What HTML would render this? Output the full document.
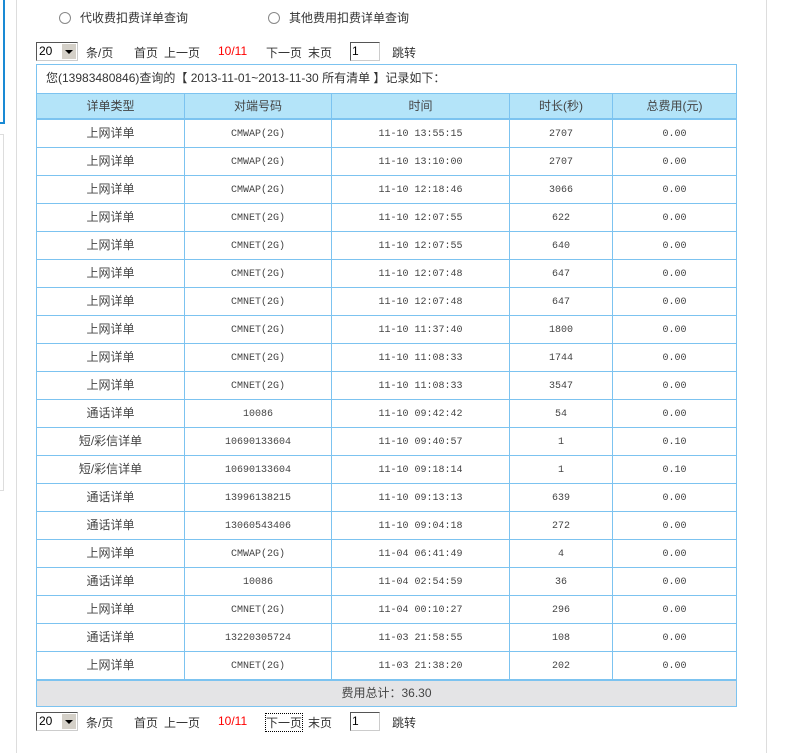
<!DOCTYPE html>
<html><head><meta charset="utf-8"><style>
body{margin:0;width:804px;height:753px;background:#fff;position:relative;overflow:hidden;font-family:"Liberation Sans","Noto Sans CJK SC",sans-serif;font-size:12px;color:#333}
.abs{position:absolute}
.radio{width:10px;height:10px;border:1px solid #888;border-radius:50%;background:#fff}
.pg{position:absolute;left:36px;height:20px;font-size:12px;color:#333}
.pg span{position:absolute;top:2px;white-space:nowrap}
.sel{position:absolute;left:0;top:0;width:40px;height:17px;border:1px solid #555;border-right-color:#ccc;border-bottom-color:#ccc;background:#fff}
.sel b{position:absolute;left:2px;top:1px;font-weight:normal;color:#000}
.sel i{position:absolute;right:1px;top:1px;width:14px;height:15px;background:#d4d0c8;border:0}
.sel i:after{content:"";position:absolute;left:3px;top:6px;border-left:4px solid transparent;border-right:4px solid transparent;border-top:4px solid #000}
.inp{position:absolute;left:314px;top:0;width:28px;height:17px;border:1px solid #555;border-right-color:#ccc;border-bottom-color:#ccc;background:#fff}
.inp b{position:absolute;left:1px;top:1px;font-weight:normal;color:#000}
table{position:absolute;left:36px;top:93px;border-collapse:collapse;width:701px}
td{border:1px solid #7cc3f0;height:24px;line-height:24px;padding:3px 0 0 0;text-align:center;vertical-align:middle;font-size:10px;color:#444;font-family:"Liberation Mono","Noto Sans CJK SC",monospace}
tr.h td{background:#b4e4f9;font-size:12px;height:24px;line-height:24px;padding:0;border-bottom:2px solid #7cc3f0;font-family:"Liberation Sans","Noto Sans CJK SC",sans-serif}
td.t{font-size:12px;height:27px;line-height:27px;padding:0;font-family:"Liberation Sans","Noto Sans CJK SC",sans-serif}
</style></head><body>
<div class="abs" style="left:-4px;top:-4px;width:5px;height:124px;border:2px solid #1a8ad4"></div>
<div class="abs" style="left:-4px;top:134px;width:6px;height:355px;border:1px solid #ddd"></div>
<div class="abs" style="left:16px;top:0;width:1px;height:753px;background:#ddd"></div>
<div class="abs" style="left:766px;top:0;width:1px;height:753px;background:#ddd"></div>

<div class="abs radio" style="left:59px;top:12px"></div>
<div class="abs" style="left:80px;top:9px;font-size:12px">代收费扣费详单查询</div>
<div class="abs radio" style="left:268px;top:12px"></div>
<div class="abs" style="left:289px;top:9px;font-size:12px">其他费用扣费详单查询</div>

<div class="pg" style="top:42px">
<div class="sel"><b>20</b><i></i></div>
<span style="left:50px">条/页</span><span style="left:98px">首页</span><span style="left:128px">上一页</span><span style="left:182px;color:#f00">10/11</span><span style="left:230px">下一页</span><span style="left:272px">末页</span>
<div class="inp"><b>1</b></div><span style="left:356px">跳转</span>
</div>

<div class="abs" style="left:36px;top:64px;width:699px;height:28px;border:1px solid #7cc3f0;border-bottom:none"></div>
<div class="abs" style="left:46px;top:69px;font-size:12px">您(13983480846)查询的【 2013-11-01~2013-11-30 所有清单 】记录如下：</div>

<table>
<tr class="h"><td style="width:147px">详单类型</td><td style="width:146px">对端号码</td><td style="width:177px">时间</td><td style="width:102px">时长(秒)</td><td>总费用(元)</td></tr>
<tr><td class="t">上网详单</td><td>CMWAP(2G)</td><td>11-10 13:55:15</td><td>2707</td><td>0.00</td></tr>
<tr><td class="t">上网详单</td><td>CMWAP(2G)</td><td>11-10 13:10:00</td><td>2707</td><td>0.00</td></tr>
<tr><td class="t">上网详单</td><td>CMWAP(2G)</td><td>11-10 12:18:46</td><td>3066</td><td>0.00</td></tr>
<tr><td class="t">上网详单</td><td>CMNET(2G)</td><td>11-10 12:07:55</td><td>622</td><td>0.00</td></tr>
<tr><td class="t">上网详单</td><td>CMNET(2G)</td><td>11-10 12:07:55</td><td>640</td><td>0.00</td></tr>
<tr><td class="t">上网详单</td><td>CMNET(2G)</td><td>11-10 12:07:48</td><td>647</td><td>0.00</td></tr>
<tr><td class="t">上网详单</td><td>CMNET(2G)</td><td>11-10 12:07:48</td><td>647</td><td>0.00</td></tr>
<tr><td class="t">上网详单</td><td>CMNET(2G)</td><td>11-10 11:37:40</td><td>1800</td><td>0.00</td></tr>
<tr><td class="t">上网详单</td><td>CMNET(2G)</td><td>11-10 11:08:33</td><td>1744</td><td>0.00</td></tr>
<tr><td class="t">上网详单</td><td>CMNET(2G)</td><td>11-10 11:08:33</td><td>3547</td><td>0.00</td></tr>
<tr><td class="t">通话详单</td><td>10086</td><td>11-10 09:42:42</td><td>54</td><td>0.00</td></tr>
<tr><td class="t">短/彩信详单</td><td>10690133604</td><td>11-10 09:40:57</td><td>1</td><td>0.10</td></tr>
<tr><td class="t">短/彩信详单</td><td>10690133604</td><td>11-10 09:18:14</td><td>1</td><td>0.10</td></tr>
<tr><td class="t">通话详单</td><td>13996138215</td><td>11-10 09:13:13</td><td>639</td><td>0.00</td></tr>
<tr><td class="t">通话详单</td><td>13060543406</td><td>11-10 09:04:18</td><td>272</td><td>0.00</td></tr>
<tr><td class="t">上网详单</td><td>CMWAP(2G)</td><td>11-04 06:41:49</td><td>4</td><td>0.00</td></tr>
<tr><td class="t">通话详单</td><td>10086</td><td>11-04 02:54:59</td><td>36</td><td>0.00</td></tr>
<tr><td class="t">上网详单</td><td>CMNET(2G)</td><td>11-04 00:10:27</td><td>296</td><td>0.00</td></tr>
<tr><td class="t">通话详单</td><td>13220305724</td><td>11-03 21:58:55</td><td>108</td><td>0.00</td></tr>
<tr><td class="t">上网详单</td><td>CMNET(2G)</td><td>11-03 21:38:20</td><td>202</td><td>0.00</td></tr>
<tr><td colspan="5" class="t" style="background:#e4e4e6;border-top:2px solid #7cc3f0;height:25px;line-height:25px">费用总计：36.30</td></tr>
</table>

<div class="pg" style="top:712px">
<div class="sel"><b>20</b><i></i></div>
<span style="left:50px">条/页</span><span style="left:98px">首页</span><span style="left:128px">上一页</span><span style="left:182px;color:#f00">10/11</span><span style="left:230px;outline:1px dotted #000">下一页</span><span style="left:272px">末页</span>
<div class="inp"><b>1</b></div><span style="left:356px">跳转</span>
</div>
</body></html>
